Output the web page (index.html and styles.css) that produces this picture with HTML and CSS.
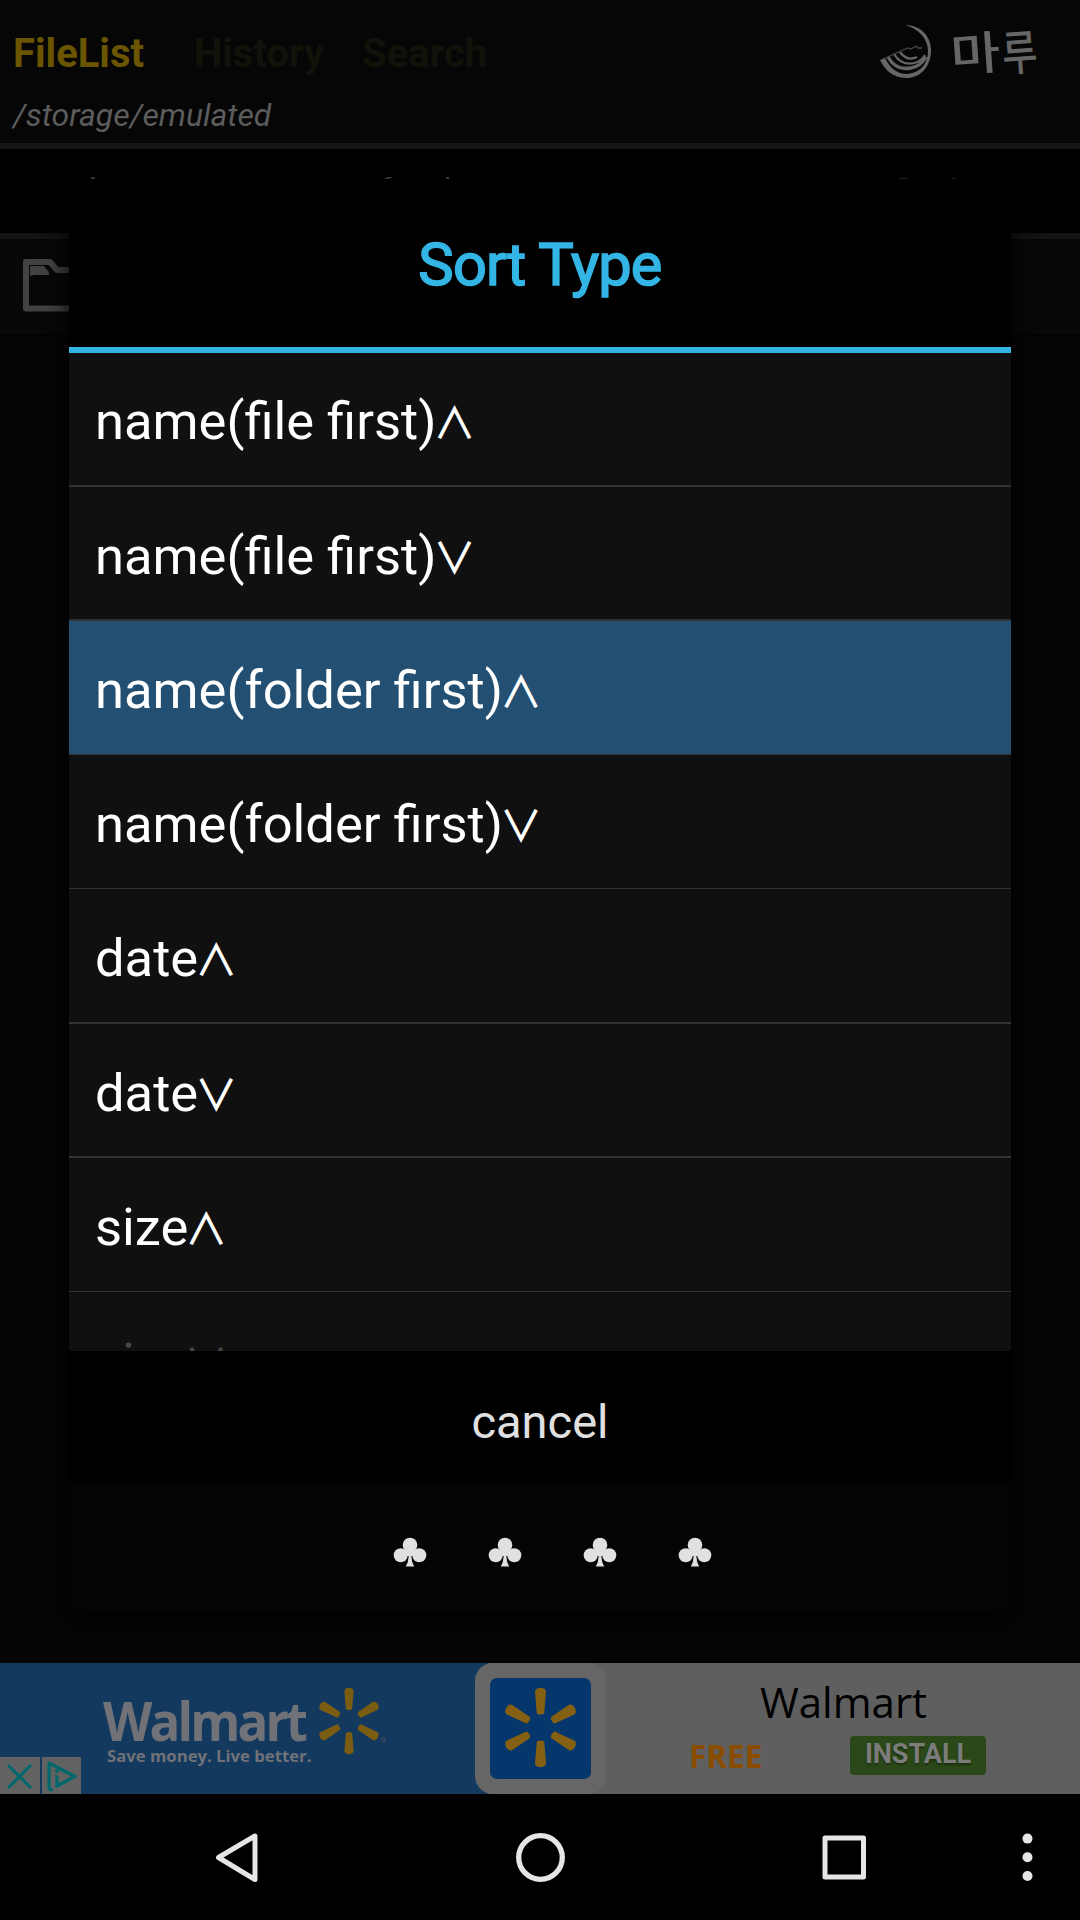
FILE: index.html
```html
<!DOCTYPE html>
<html lang="en">
<head>
<meta charset="utf-8">
<title>Sort Type</title>
<link rel="stylesheet" href="styles.css">
</head>
<body>
<div class="screen">
  <header class="header">
    <nav class="tabs">
      <span class="tab tab-active">FileList</span>
      <span class="tab tab-history">History</span>
      <span class="tab tab-search">Search</span>
    </nav>
    <div class="brand">
      <svg class="brand-mark" width="54" height="58" viewBox="0 0 54 58">
        <path d="M25 2C40 2 52 13 51 29C50 45 40 55 26 55C13 55 4 46 0 37L5 35C10 45 17 51 27 51C40 50 48 41 48 28C48 16 39 6 25 2Z" fill="#666"/>
        <path d="M8 34C13 43 21 47 31 45C38 44 43 39 46 34" fill="none" stroke="#666" stroke-width="3.4"/>
        <path d="M14 31C19 39 26 42 34 40C39 39 43 36 45 32M20 29C25 36 31 37 37 34" fill="none" stroke="#666" stroke-width="2.2"/>
        <path d="M1 37L23 27L28 25L31 26L36 23L38 25L42 25" fill="none" stroke="#484848" stroke-width="1.3"/>
      </svg>
      <span class="brand-name"><span class="brand-ma">마</span><span class="brand-ru">루</span></span>
    </div>
    <div class="path">/storage/emulated</div>
  </header>
  <div class="toolbar">
    <svg width="1080" height="84" viewBox="0 0 1080 84">
      <g fill="#4a4a4a"><rect x="91" y="28" width="4" height="2"/><path d="M384 30l3-2h5v1l-4 1z"/><rect x="446" y="28" width="3" height="2"/></g>
      <g fill="#2c2c2c"><rect x="899" y="29" width="9" height="1"/><rect x="952" y="29" width="4" height="1"/></g>
    </svg>
  </div>
  <main class="files">
    <div class="file-row">
      <svg width="70" height="56" viewBox="0 0 70 56">
        <path d="M4 4H28L35 12H66V50.500H4Z" fill="none" stroke="#424242" stroke-width="6" stroke-linejoin="round"/>
        <path d="M8 9Q8 8 9 8H22L27 14V17H12L8 18Z" fill="#424242"/>
      </svg>
    </div>
  </main>
  <footer class="ad">
    <div class="ad-brand">
      <div class="ad-words">
        <div class="ad-logo">Walmart</div>
        <div class="ad-tagline">Save money. Live better.</div>
      </div>
      <svg class="ad-spark" width="76" height="70" viewBox="-35 -35 76 70">
        <defs><path id="ray" d="M-4.6 -30Q-4.6 -33 0 -33.3Q4.6 -33 4.6 -30L3.2 -12.5Q3 -11 0 -11Q-3 -11 -3.2 -12.5Z"/></defs>
        <g fill="#7a5c12"><use href="#ray"/><use href="#ray" transform="rotate(60)"/><use href="#ray" transform="rotate(120)"/><use href="#ray" transform="rotate(180)"/><use href="#ray" transform="rotate(240)"/><use href="#ray" transform="rotate(300)"/></g>
        <circle cx="34.5" cy="18.5" r="2" fill="none" stroke="#4a5560"/>
      </svg>
      <div class="ad-choices">
        <span class="ad-choice"><svg width="39" height="37" viewBox="0 0 39 37"><path d="M8 8L31 31M31 8L8 31" stroke="#00686c" stroke-width="3"/></svg></span>
        <span class="ad-choice"><svg width="39" height="37" viewBox="0 0 39 37"><path d="M11 33L7 32V6L33 19.5L15 29V19" fill="none" stroke="#00686c" stroke-width="3.2" stroke-linejoin="round"/><path d="M15 19H13M13 29H18" stroke="#00686c" stroke-width="2"/><circle cx="15" cy="14" r="2" fill="#00686c"/></svg></span>
      </div>
    </div>
    <div class="ad-frame">
      <div class="ad-tile">
        <svg width="101" height="101" viewBox="-50.5 -49.5 101 101">
          <g fill="#856012" transform="scale(1.19)"><use href="#ray"/><use href="#ray" transform="rotate(60)"/><use href="#ray" transform="rotate(120)"/><use href="#ray" transform="rotate(180)"/><use href="#ray" transform="rotate(240)"/><use href="#ray" transform="rotate(300)"/></g>
        </svg>
      </div>
    </div>
    <div class="ad-info">
      <div class="ad-title">Walmart</div>
      <div class="ad-actions"><span class="ad-free">FREE</span><span class="ad-install">INSTALL</span></div>
    </div>
  </footer>
  <div class="navbar">
    <svg width="1080" height="126" viewBox="0 0 1080 126">
      <g fill="none" stroke="#e6e6e6" stroke-width="5" stroke-linejoin="round">
        <path d="M255 42V85.5L218.500 63.500Z"/>
        <circle cx="540.5" cy="63.500" r="21.800" stroke-width="5.300"/>
        <rect x="825" y="44" width="38.500" height="39"/>
      </g>
      <g fill="#e6e6e6"><circle cx="1027.500" cy="44.600" r="5"/><circle cx="1027.500" cy="63.300" r="5"/><circle cx="1027.500" cy="82" r="5"/></g>
    </svg>
  </div>

  <section class="dialog">
    <h1 class="dialog-title">Sort Type</h1>
    <div class="options">
      <div class="option">name(file first)<span class="dir">∧</span></div>
      <div class="option">name(file first)<span class="dir">∨</span></div>
      <div class="option option-selected">name(folder first)<span class="dir">∧</span></div>
      <div class="option">name(folder first)<span class="dir">∨</span></div>
      <div class="option">date<span class="dir">∧</span></div>
      <div class="option">date<span class="dir">∨</span></div>
      <div class="option">size<span class="dir">∧</span></div>
      <div class="option option-faded">size<span class="dir">∨</span></div>
    </div>
    <div class="cancel">cancel</div>
    <div class="clubs">
      <svg class="club" viewBox="0 0 34 30"><defs><g id="club"><circle cx="17" cy="8" r="7.300"/><circle cx="7.700" cy="18.300" r="7"/><circle cx="26.300" cy="18.300" r="7"/><path d="M12 13H22V19H18.300Q18.500 25 21.200 29.500H12.800Q15.500 25 15.700 19H12Z"/></g></defs><use href="#club"/></svg>
      <svg class="club" viewBox="0 0 34 30"><use href="#club"/></svg>
      <svg class="club" viewBox="0 0 34 30"><use href="#club"/></svg>
      <svg class="club" viewBox="0 0 34 30"><use href="#club"/></svg>
    </div>
  </section>
</div>
</body>
</html>
```
FILE: styles.css
```css
* { box-sizing: border-box; }
body { margin: 0; background: #000; font-family: Roboto, "Noto Sans CJK KR", sans-serif; }
svg { display: block; }
.screen { position: relative; width: 1080px; height: 1920px; overflow: hidden; display: flex; flex-direction: column; background: #050505; }

.header { height: 149px; border-bottom: 6px solid #161616; background: #060606; display: grid; grid-template-columns: 1fr auto; grid-template-rows: 96px 47px; }
.tabs { display: flex; padding: 30px 0 0 13px; font-size: 40px; line-height: 48px; font-weight: 700; }
.tab-active { color: #6a5500; width: 181px; }
.tab-history { color: #12110a; width: 168px; }
.tab-search { color: #12110a; }
.brand { display: flex; padding: 23px 38px 0 0; }
.brand-name { display: flex; margin-left: 17px; color: #666; font-weight: 500; line-height: 62px; }
.brand-ma { font-size: 54px; transform: rotate(-4deg) scaleY(.85); }
.brand-ru { font-size: 48px; margin-left: -3px; transform: rotate(-4deg) scaleX(.8); }
.path { padding-left: 13px; font-size: 31.900px; line-height: 38px; font-style: italic; color: #5c5c5c; }

.toolbar { height: 84px; background: #000; }
.files { flex: 1; border-top: 6px solid #131313; }
.file-row { height: 93px; padding: 19px 0 0 22px; background: #070707; border-bottom: 1px solid #0d0d0d; }

.ad { height: 131px; display: flex; background: linear-gradient(90deg, #13395f 488px, #5f5f5f 488px); }
.ad-brand { position: relative; width: 475px; display: flex; padding-left: 103px; }
.ad-words { width: 211px; padding-top: 30px; white-space: nowrap; font-family: "Open Sans", sans-serif; font-weight: 700; color: #707278; }
.ad-logo { width: 211px; font-size: 54px; line-height: 54px; letter-spacing: -3px; transform: scaleX(.945); transform-origin: left; }
.ad-tagline { padding-left: 4px; font-size: 16.700px; line-height: 18px; }
.ad-spark { margin-top: 23px; }
.ad-choices { position: absolute; left: 0; bottom: 0; display: flex; gap: 2px; }
.ad-choice { width: 39.500px; height: 37px; background: #626262; }
.ad-frame { width: 131px; padding: 15px; border-radius: 18px; background: #666; }
.ad-tile { width: 101px; height: 101px; border-radius: 7px; background: #05366c; }
.ad-info { flex: 1; font-family: "Open Sans", sans-serif; }
.ad-title { padding: 11px 0 0 154px; font-size: 42px; line-height: 56px; color: #000; }
.ad-actions { display: flex; padding: 6px 0 0 83px; font-weight: 700; }
.ad-free { width: 161px; margin-top: -1px; font-size: 31.500px; line-height: 42px; color: #8a4d00; }
.ad-install { width: 136px; height: 39px; border-radius: 4px; background: #2b4918; color: #7c7c7c; font: 700 27px/36px Roboto, sans-serif; text-align: center; text-shadow: 0 2px 2px #1c3010; }

.navbar { height: 126px; background: #000; }

.dialog { position: absolute; left: 69px; top: 180px; width: 942px; height: 1434px; display: flex; flex-direction: column; background: #040404; box-shadow: 0 6px 24px #000; }
.dialog-title { margin: 0; height: 173px; border-bottom: 6px solid #33b5e5; padding-top: 4px; background: #000; color: #33b5e5; font-size: 59.500px; line-height: 162px; font-weight: 400; letter-spacing: -.8px; -webkit-text-stroke: 1.600px #33b5e5; text-align: center; }
.options { height: 998px; overflow: hidden; display: flex; flex-direction: column; gap: 1.500px; background: #323232; }
.option { flex: none; display: flex; align-items: baseline; height: 132.750px; padding: 6px 0 0 26px; background: #101010; color: #fff; font-size: 52.500px; line-height: 126.750px; white-space: nowrap; }
.option:first-child { margin-top: -.6px; }
.option-selected { background: #235072; }
.option-faded { padding-top: 7px; color: #484848; }
.dir { width: 36px; display: flex; justify-content: center; font-family: "Noto Sans CJK KR", sans-serif; font-size: 43px; font-weight: 500; line-height: 1; }
.cancel { height: 132px; padding-top: 12px; background: #000; color: #e0e0e0; font-size: 47px; line-height: 118px; text-align: center; }
.clubs { display: flex; justify-content: space-between; padding: 54px 299px 0 324px; }
.club { width: 34px; height: 30px; fill: #e0e0e0; }
```
